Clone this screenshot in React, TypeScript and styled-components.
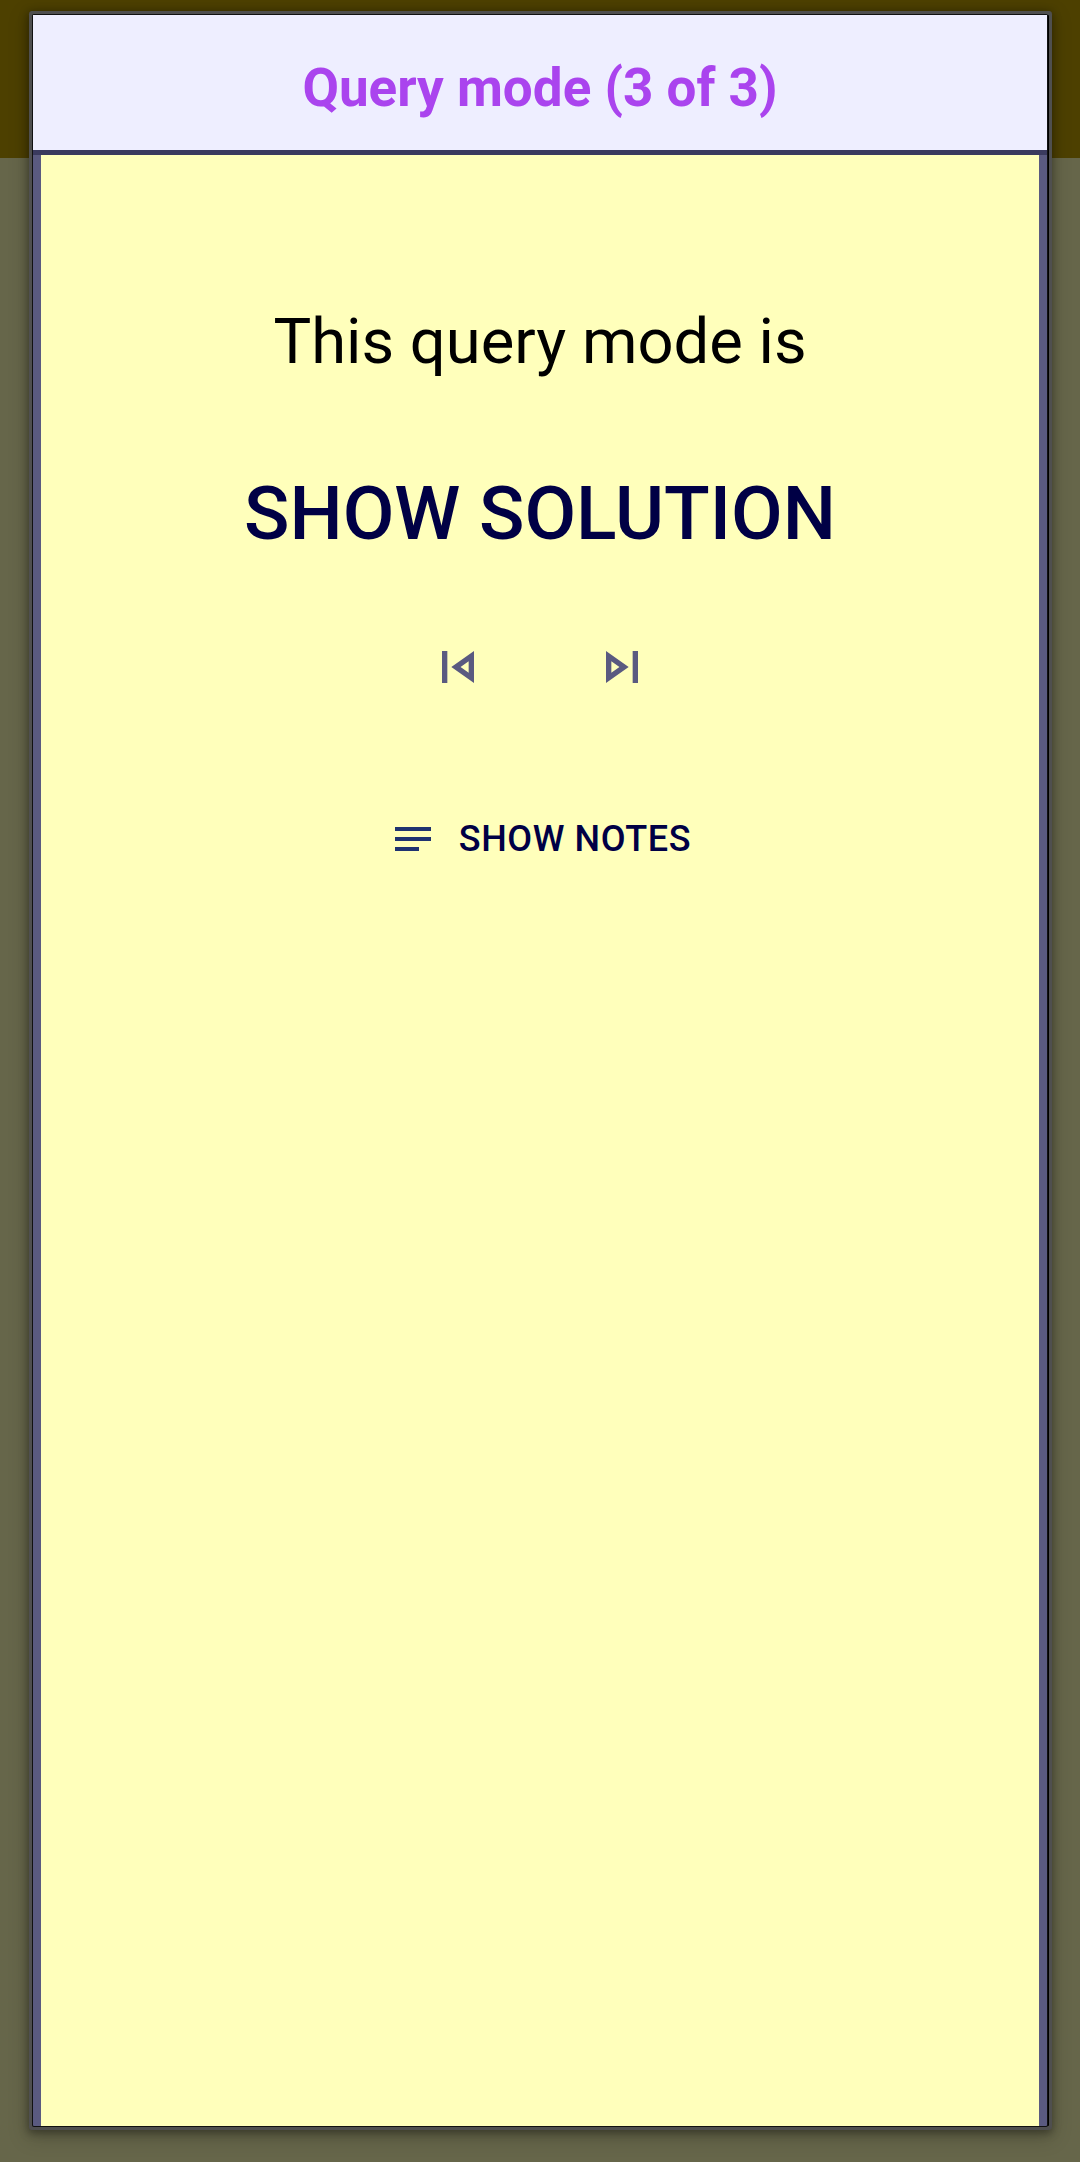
import React from "react";
import styled, { createGlobalStyle } from "styled-components";

const GlobalStyle = createGlobalStyle`
  html, body {
    margin: 0;
    padding: 0;
    background: #66664a;
  }
  body {
    font-family: Roboto, "Liberation Sans", sans-serif;
  }
`;

const Page = styled.div`
  box-sizing: border-box;
  width: 1080px;
  height: 2162px;
  padding: 15px 33px 36px;
  overflow: hidden;
  background: linear-gradient(to bottom, #4d4000 158px, #66664a 158px);
`;

const Dialog = styled.div`
  display: flex;
  flex-direction: column;
  height: 100%;
  background: #5a5a80;
  border-radius: 1px;
  box-shadow:
    0 0 0 1px #111,
    2px 0 0 0 #000,
    0 0 0 4px #4f4f4f,
    1px 0 0 4px #4f4f4f,
    0 2px 8px 5px rgba(0, 0, 0, 0.35),
    0 6px 20px 6px rgba(0, 0, 0, 0.18);
`;

const Header = styled.header`
  display: flex;
  align-items: center;
  justify-content: center;
  flex: none;
  height: 135px;
  background: #eeeeff;
  border-bottom: 5px solid #3a3a5e;
`;

const Title = styled.h1`
  margin: 10px 0 0;
  font-size: 53px;
  font-weight: 700;
  color: #aa44ee;
`;

const Body = styled.main`
  display: flex;
  flex-direction: column;
  align-items: center;
  flex: 1;
  margin: 0 8px;
  padding-top: 149px;
  background: #ffffbb;
`;

const Intro = styled.p`
  margin: 0;
  font-size: 63.3px;
  line-height: 75px;
  color: #000;
`;

const Mode = styled.h2`
  margin: 90px 0 0;
  font-size: 75px;
  line-height: 88px;
  font-weight: 500;
  color: #000045;
`;

const Controls = styled.div`
  display: flex;
  gap: 100px;
  margin-top: 78px;
`;

const IconButton = styled.button`
  display: flex;
  padding: 0;
  border: 0;
  background: none;
  color: #5a5a80;
`;

const NotesButton = styled.button`
  display: flex;
  align-items: center;
  gap: 22px;
  margin-top: 116px;
  padding: 0;
  border: 0;
  background: none;
  font-family: inherit;
  font-size: 36px;
  font-weight: 500;
  letter-spacing: 0.6px;
  color: #000045;
`;

const Icon = ({ d, size, color }: { d: string; size: number; color?: string }) => (
  <svg width={size} height={size} viewBox="0 0 24 24" fill={color || "currentColor"}>
    <path d={d} />
  </svg>
);

export default function App() {
  return (
    <Page>
      <GlobalStyle />
      <Dialog>
        <Header>
          <Title>Query mode (3 of 3)</Title>
        </Header>
        <Body>
          <Intro>This query mode is</Intro>
          <Mode>SHOW SOLUTION</Mode>
          <Controls>
            <IconButton>
              <Icon size={64} d="M6 6h2v12H6zm3.5 6 8.5 6V6l-8.5 6zm6.5 2.14L12.97 12 16 9.86v4.28z" />
            </IconButton>
            <IconButton>
              <Icon size={64} d="M6 18l8.5-6L6 6v12zm2-8.14L11.03 12 8 14.14V9.86zM16 6h2v12h-2z" />
            </IconButton>
          </Controls>
          <NotesButton>
            <Icon size={48} color="#1f3370" d="M3 18h12v-2H3v2zM3 6v2h18V6H3zm0 7h18v-2H3v2z" />
            SHOW NOTES
          </NotesButton>
        </Body>
      </Dialog>
    </Page>
  );
}
